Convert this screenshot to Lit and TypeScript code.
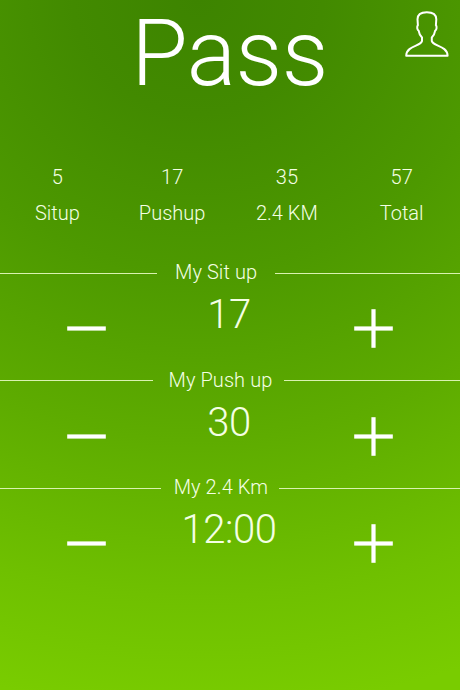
import { LitElement, html, css, svg } from "lit";
import { customElement, property } from "lit/decorators.js";
import { styleMap } from "lit/directives/style-map.js";

interface Score {
  value: string;
  label: string;
}

interface Counter {
  label: string;
  value: string;
  ruleLeft: number;
  ruleRight: number;
  padLeft: number;
}

const scores: Score[] = [
  { value: "5", label: "Situp" },
  { value: "17", label: "Pushup" },
  { value: "35", label: "2.4 KM" },
  { value: "57", label: "Total" },
];

const counters: Counter[] = [
  { label: "My Sit up", value: "17", ruleLeft: 157, ruleRight: 185.5, padLeft: 18 },
  { label: "My Push up", value: "30", ruleLeft: 153, ruleRight: 176, padLeft: 15.5 },
  { label: "My 2.4 Km", value: "12:00", ruleLeft: 161, ruleRight: 181, padLeft: 12.7 },
];

@customElement("counter-row")
class CounterRow extends LitElement {
  @property({ attribute: false }) item!: Counter;

  static styles = css`
    :host {
      display: block;
      height: 107.67px;
    }
    .head {
      display: grid;
      align-items: center;
      height: 24px;
    }
    .rule {
      height: 1px;
      margin-top: 2px;
      background: #d9f2b0;
    }
    .label {
      font-size: 20px;
      line-height: 24px;
      letter-spacing: 0.08px;
      white-space: nowrap;
    }
    .body {
      display: grid;
      grid-template-columns: 173px 1fr 173px;
    }
    .value {
      font-size: 40px;
      line-height: 48px;
      letter-spacing: -0.4px;
      margin-top: 7px;
      padding-right: 2px;
      text-align: center;
    }
    .button {
      display: flex;
      justify-content: center;
      padding: 25px 0 0;
      color: #fff;
    }
    .plus {
      padding-right: 1px;
    }
    svg {
      display: block;
      width: 39px;
      height: 39px;
      fill: #fff;
    }
  `;

  render() {
    const { label, value, ruleLeft, ruleRight, padLeft } = this.item;
    return html`
      <div class="head" style=${styleMap({ gridTemplateColumns: `${ruleLeft}px 1fr ${ruleRight}px` })}>
        <div class="rule"></div>
        <div class="label" style=${styleMap({ paddingLeft: `${padLeft}px` })}>${label}</div>
        <div class="rule"></div>
      </div>
      <div class="body">
        <div class="button" role="button" aria-label="Decrease">
          <svg viewBox="0 0 39 39"><rect x="0.2" y="17.4" width="38.6" height="4.2" /></svg>
        </div>
        <div class="value">${value}</div>
        <div class="button plus" role="button" aria-label="Increase">
          <svg viewBox="0 0 39 39">
            <rect x="0.2" y="17.4" width="38.6" height="4.2" />
            <rect x="17.4" y="0.2" width="4.2" height="38.6" />
          </svg>
        </div>
      </div>
    `;
  }
}

@customElement("app-root")
class AppRoot extends LitElement {
  static styles = css`
    :host {
      display: block;
      position: relative;
      box-sizing: border-box;
      height: 690px;
      overflow: hidden;
      font-family: Roboto, "Liberation Sans", sans-serif;
      font-weight: 300;
      color: #f4ffe4;
      background: radial-gradient(ellipse 780px 710px at 43% 0, #3d8400 0%, #428a00 16%, #4d9900 38%, #5eac00 62%, #6fc000 84%, #79cc00 100%);
    }
    .title {
      height: 108px;
      margin: 0;
      padding-right: 1px;
      font-size: 92px;
      line-height: 108px;
      font-weight: 300;
      letter-spacing: -0.5px;
      text-align: center;
      color: #fff;
    }
    .profile {
      position: absolute;
      left: 404px;
      top: 10px;
      width: 46px;
      height: 48px;
      fill: none;
      stroke: #fff;
      stroke-width: 2;
      stroke-linejoin: round;
    }
    .scores {
      display: grid;
      grid-template-columns: repeat(4, 1fr);
      margin-top: 57px;
      padding-right: 1px;
      font-size: 20px;
      line-height: 24px;
      text-align: center;
    }
    .score {
      display: grid;
      gap: 12px;
    }
    .counters {
      margin-top: 35px;
    }
  `;

  render() {
    return html`
      <h1 class="title">Pass</h1>
      <svg class="profile" viewBox="0 0 46 48">
        ${svg`<path d="M22.800 2.200C17 2.200 13.500 4.800 13.500 9.300L13.900 15.200C12.800 16.500 13 19.700 14.700 20.900C15.100 23.900 16.300 25.800 18 27.500V31C17.200 36.300 2.500 35.500 2.200 45.700H43.600C43.300 35.500 28.600 36.300 27.800 31V27.500C29.500 25.800 30.700 23.900 31.100 20.900C32.800 19.700 33 16.500 31.900 15.200L32.300 9.300C32.300 4.800 28.600 2.200 22.800 2.200Z" />`}
      </svg>
      <div class="scores">
        ${scores.map(
          (s) => html`<div class="score"><span>${s.value}</span><span>${s.label}</span></div>`
        )}
      </div>
      <div class="counters">
        ${counters.map((c) => html`<counter-row .item=${c}></counter-row>`)}
      </div>
    `;
  }
}
